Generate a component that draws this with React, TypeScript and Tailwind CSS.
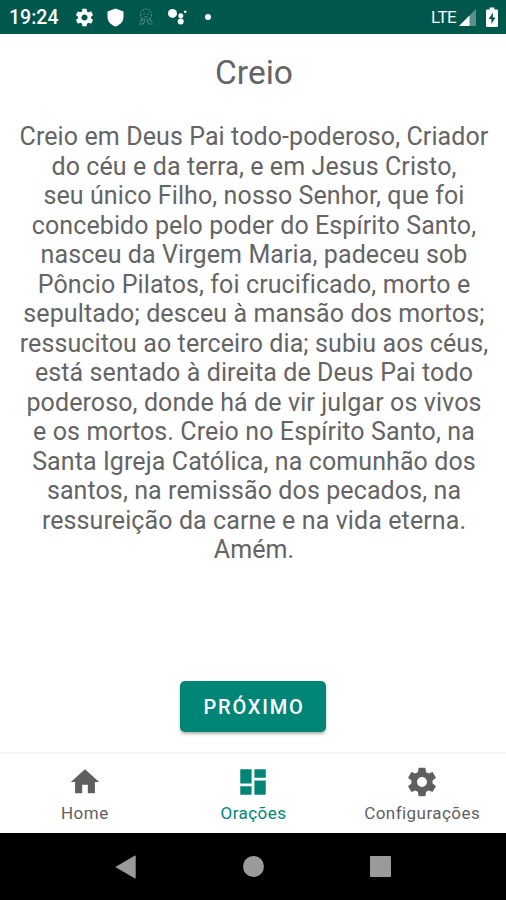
import React from "react";

const GEAR =
  "M19.43 12.98c.04-.32.07-.64.07-.98s-.03-.66-.07-.98l2.11-1.65c.19-.15.24-.42.12-.64l-2-3.46c-.12-.22-.39-.3-.61-.22l-2.49 1c-.52-.4-1.08-.73-1.69-.98l-.38-2.65C14.46 2.18 14.25 2 14 2h-4c-.25 0-.46.18-.49.42l-.38 2.65c-.61.25-1.17.59-1.69.98l-2.49-1c-.23-.09-.49 0-.61.22l-2 3.46c-.13.22-.07.49.12.64l2.11 1.65c-.04.32-.07.65-.07.98s.03.66.07.98l-2.11 1.65c-.19.15-.24.42-.12.64l2 3.46c.12.22.39.3.61.22l2.49-1c.52.4 1.08.73 1.69.98l.38 2.65c.03.24.24.42.49.42h4c.25 0 .46-.18.49-.42l.38-2.65c.61-.25 1.17-.59 1.69-.98l2.49 1c.23.09.49 0 .61-.22l2-3.46c.12-.22.07-.49-.12-.64l-2.11-1.65zM12 15.5c-1.93 0-3.5-1.57-3.5-3.5s1.57-3.5 3.5-3.5 3.5 1.57 3.5 3.5-1.57 3.5-3.5 3.5z";
const HOME = "M10 20v-6h4v6h5v-8h3L12 3 2 12h3v8z";
const DASHBOARD = "M3 13h8V3H3v10zm0 8h8v-6H3v6zm10 0h8V11h-8v10zm0-18v6h8V3h-8z";

const LINES = [
  "Creio em Deus Pai todo-poderoso, Criador",
  "do céu e da terra, e em Jesus Cristo,",
  "seu único Filho, nosso Senhor, que foi",
  "concebido pelo poder do Espírito Santo,",
  "nasceu da Virgem Maria, padeceu sob",
  "Pôncio Pilatos, foi crucificado, morto e",
  "sepultado; desceu à mansão dos mortos;",
  "ressucitou ao terceiro dia; subiu aos céus,",
  "está sentado à direita de Deus Pai todo",
  "poderoso, donde há de vir julgar os vivos",
  "e os mortos. Creio no Espírito Santo, na",
  "Santa Igreja Católica, na comunhão dos",
  "santos, na remissão dos pecados, na",
  "ressureição da carne e na vida eterna.",
  "Amém.",
];

const TABS = [
  { label: "Home", icon: HOME, active: false },
  { label: "Orações", icon: DASHBOARD, active: true },
  { label: "Configurações", icon: GEAR, active: false },
];

function StatusBar() {
  return (
    <header className="flex h-[34px] shrink-0 items-center bg-[#00574b] pl-[9px] pr-[8px] text-white">
      <span className="w-[65px] pt-[2px] text-[19.5px] font-medium leading-[32px]">19:24</span>
      <svg className="h-[21px] w-[21px]" viewBox="0 0 24 24" fill="currentColor">
        <path d={GEAR} />
      </svg>
      <svg className="ml-[12px] h-[19px] w-[17px]" viewBox="0 0 17 19" fill="currentColor">
        <path d="M8.5 0.5L16.5 3.5V9C16.5 13.5 13 17.2 8.5 18.5C4 17.2 0.5 13.5 0.5 9V3.5Z" />
      </svg>
      <svg className="ml-[14px] h-[18px] w-[16px] opacity-40" viewBox="0 0 16 18" fill="none" stroke="#b9d5d0" strokeWidth="1.2">
        <circle cx="8" cy="6.5" r="5.5" strokeDasharray="2 1" />
        <path d="M5 6h2M9 6h2M6 9h4M5 11L2 14M11 11l3 3M1 16h4l2-3M15 16h-4L9 13" />
      </svg>
      <svg className="ml-[14px] h-[18px] w-[20px]" viewBox="0 0 20 18" fill="currentColor">
        <circle cx="4.5" cy="5.4" r="4.5" />
        <circle cx="12.8" cy="7.7" r="2.5" />
        <circle cx="17.2" cy="3.8" r="1.3" />
        <circle cx="12.7" cy="13.6" r="3" />
      </svg>
      <span className="ml-[17px] h-[6px] w-[6px] rounded-full bg-white" />
      <span className="ml-auto text-[17px] leading-[34px] tracking-[-0.6px]">LTE</span>
      <svg className="ml-[3px] mr-px h-[17px] w-[17px]" viewBox="0 0 17 17" fill="currentColor">
        <path d="M0 17L17 0V17Z" opacity="0.35" />
        <path d="M0 17L10.5 6.5V17Z" />
      </svg>
      <svg className="ml-[9px] h-[20px] w-[12px]" viewBox="0 0 11 20" preserveAspectRatio="none">
        <path d="M3.3 0.5H7.7V2.5H9.8Q11 2.5 11 3.7V18.8Q11 20 9.8 20H1.2Q0 20 0 18.8V3.7Q0 2.5 1.2 2.5H3.3Z" fill="#fff" />
        <path d="M6.3 5.5L2.5 12H5V17L8.7 10.5H6.3Z" fill="#00574b" />
      </svg>
    </header>
  );
}

function BottomTabs() {
  return (
    <nav className="grid h-[79px] shrink-0 grid-cols-3 bg-white">
      {TABS.map((tab) => (
        <div
          key={tab.label}
          className={`flex flex-col items-center pt-[11px] ${tab.active ? "text-[#008577]" : "text-[#5f5f5f]"}`}
        >
          <svg className="ml-[1px] h-[34px] w-[34px]" viewBox="0 0 24 24" fill="currentColor">
            <path d={tab.icon} />
          </svg>
          <span className="mt-[4px] pl-[1px] text-[17px] leading-[20px] tracking-[0.45px]">{tab.label}</span>
        </div>
      ))}
    </nav>
  );
}

function SystemNav() {
  return (
    <footer className="flex h-[67px] shrink-0 items-center justify-between bg-black pl-[115px] pr-[115px]">
      <svg className="h-[24px] w-[21px]" viewBox="0 0 21 24" fill="#9a9a9a">
        <path d="M0.3 12L19.5 0.7Q20.7 0.2 20.7 1.5V22.5Q20.7 23.8 19.5 23.3Z" />
      </svg>
      <span className="h-[21px] w-[21px] rounded-full bg-[#9a9a9a]" />
      <span className="h-[21px] w-[21px] rounded-[1px] bg-[#9a9a9a]" />
    </footer>
  );
}

export default function App() {
  return (
    <div className="flex h-[900px] w-[506px] flex-col overflow-hidden bg-white font-['Roboto',sans-serif]">
      <StatusBar />
      <main className="flex flex-1 flex-col items-center text-center text-[#646464]">
        <h1 className="mt-[19px] pl-[2px] text-[33.5px] font-normal leading-[40px]">Creio</h1>
        <div className="mt-[29px] whitespace-nowrap pl-[2px] text-[25px] leading-[29.5px] tracking-[0.1px]">
          {LINES.map((line) => (
            <p key={line}>{line}</p>
          ))}
        </div>
        <button className="mt-auto mb-[20px] h-[51px] w-[146px] rounded-[5px] bg-[#008577] pl-[2px] pt-[2px] text-[20px] font-medium leading-[49px] tracking-[1.8px] text-white shadow-[0_2px_3px_rgba(0,0,0,0.3)]">
          PRÓXIMO
        </button>
      </main>
      <div className="h-[2px] shrink-0 bg-[#f3f3f3]" />
      <BottomTabs />
      <SystemNav />
    </div>
  );
}
